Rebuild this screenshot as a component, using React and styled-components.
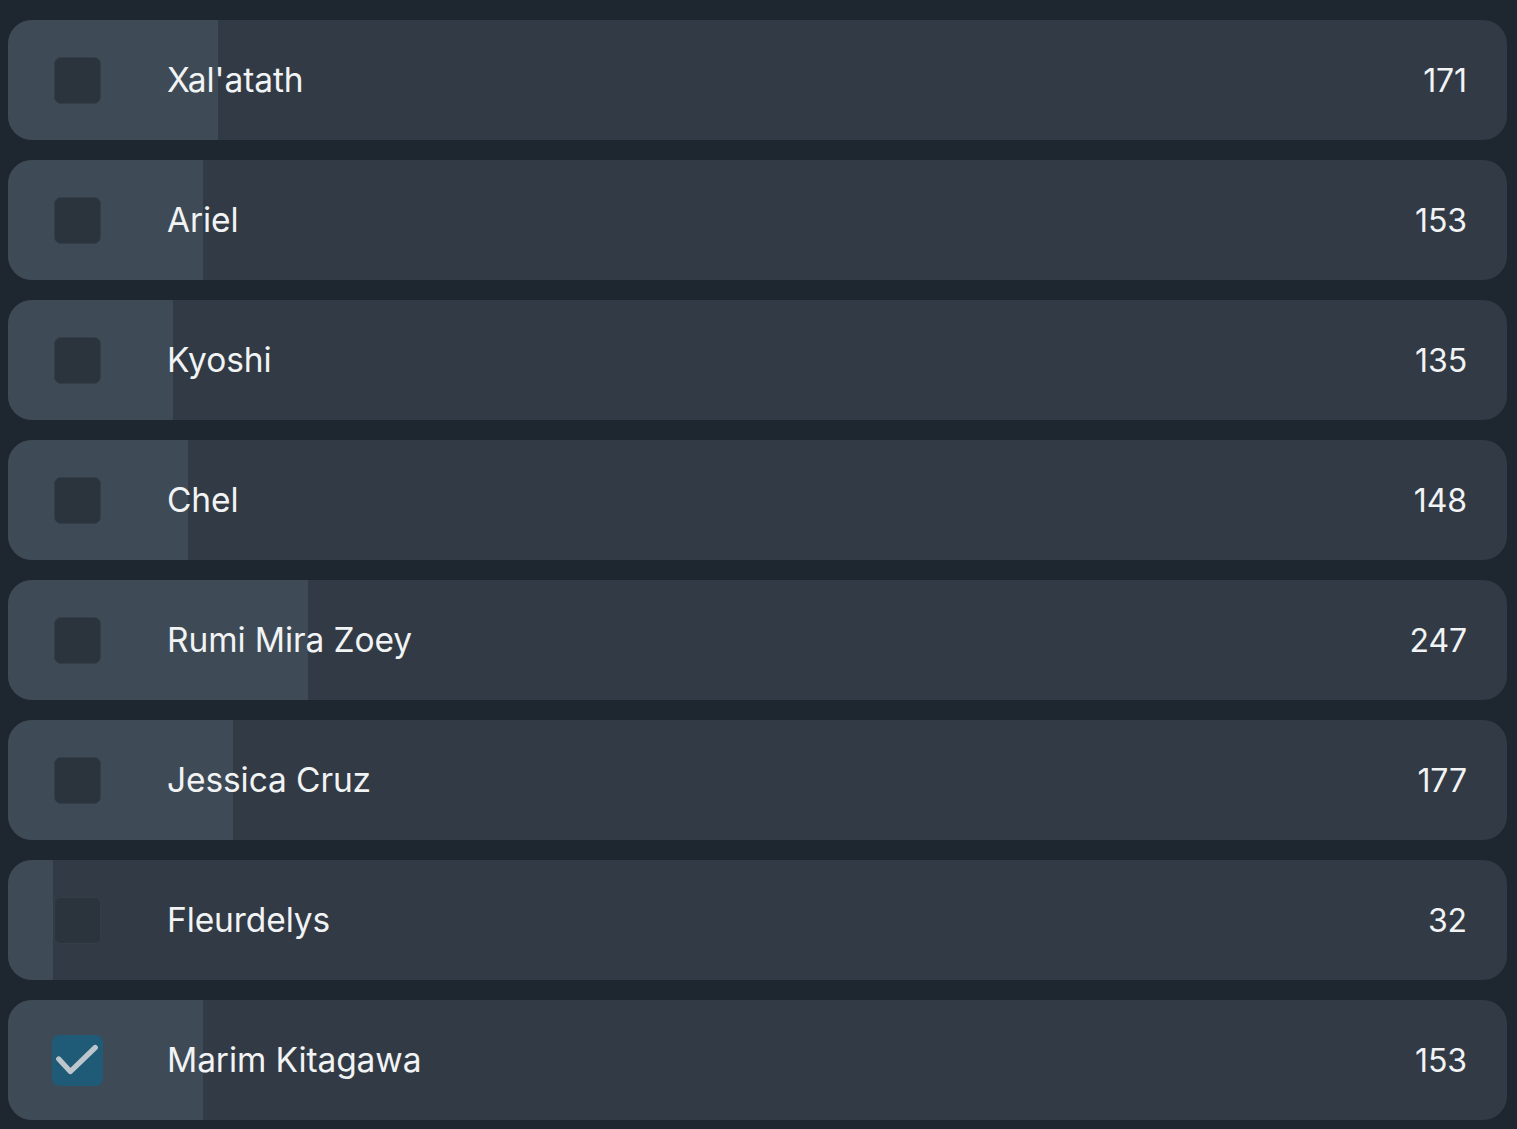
import React from "react";
import styled, { createGlobalStyle } from "styled-components";

const Global = createGlobalStyle`
  html, body { margin: 0; padding: 0; background: #1e2630; }
  body { font-family: Inter, "Noto Sans", sans-serif; }
`;

const List = styled.div`
  display: flex;
  flex-direction: column;
  gap: 20px;
  padding: 20px 10px 10px 8px;
`;

const Row = styled.div`
  position: relative;
  height: 120px;
  border-radius: 24px;
  background: #323b45;
  overflow: hidden;
  display: flex;
  align-items: center;
  padding: 0 40px 0 46px;
`;

const Fill = styled.div`
  position: absolute;
  left: 0;
  top: 0;
  bottom: 0;
  background: #3e4b56;
`;

const Box = styled.span`
  position: relative;
  box-sizing: border-box;
  width: ${(p) => (p.$checked ? "51px" : "47px")};
  height: ${(p) => (p.$checked ? "51px" : "47px")};
  margin: 0 ${(p) => (p.$checked ? "-2px" : "0")};
  border-radius: 7px;
  background: ${(p) => (p.$checked ? "#1f5a76" : "#2b333c")};
  border: 1px solid ${(p) => (p.$checked ? "#1f5a76" : "#343e48")};
  display: flex;
  align-items: center;
  justify-content: center;
  flex-shrink: 0;
`;

const Name = styled.span`
  position: relative;
  margin-left: 66px;
  flex: 1;
  color: #f1f3f4;
  font-size: 33.5px;
  letter-spacing: -0.1px;
`;

const Count = styled.span`
  position: relative;
  color: #f1f3f4;
  font-size: 32px;
  letter-spacing: -0.1px;
`;

const rows = [
  { name: "Xal'atath", count: 171, pct: 14 },
  { name: "Ariel", count: 153, pct: 13 },
  { name: "Kyoshi", count: 135, pct: 11 },
  { name: "Chel", count: 148, pct: 12 },
  { name: "Rumi Mira Zoey", count: 247, pct: 20 },
  { name: "Jessica Cruz", count: 177, pct: 15 },
  { name: "Fleurdelys", count: 32, pct: 3 },
  { name: "Marim Kitagawa", count: 153, pct: 13, checked: true },
];

export default function App() {
  return (
    <>
      <Global />
      <List>
        {rows.map((r) => (
          <Row key={r.name}>
            <Fill style={{ width: `${r.pct}%` }} />
            <Box $checked={r.checked}>
              {r.checked && (
                <svg width="51" height="51" viewBox="0 0 51 51">
                  <polyline
                    points="6,24 18,37 44,12"
                    fill="none"
                    stroke="#bcc6cc"
                    strokeWidth="5.5"
                    strokeLinecap="round"
                    strokeLinejoin="round"
                  />
                </svg>
              )}
            </Box>
            <Name>{r.name}</Name>
            <Count>{r.count}</Count>
          </Row>
        ))}
      </List>
    </>
  );
}
